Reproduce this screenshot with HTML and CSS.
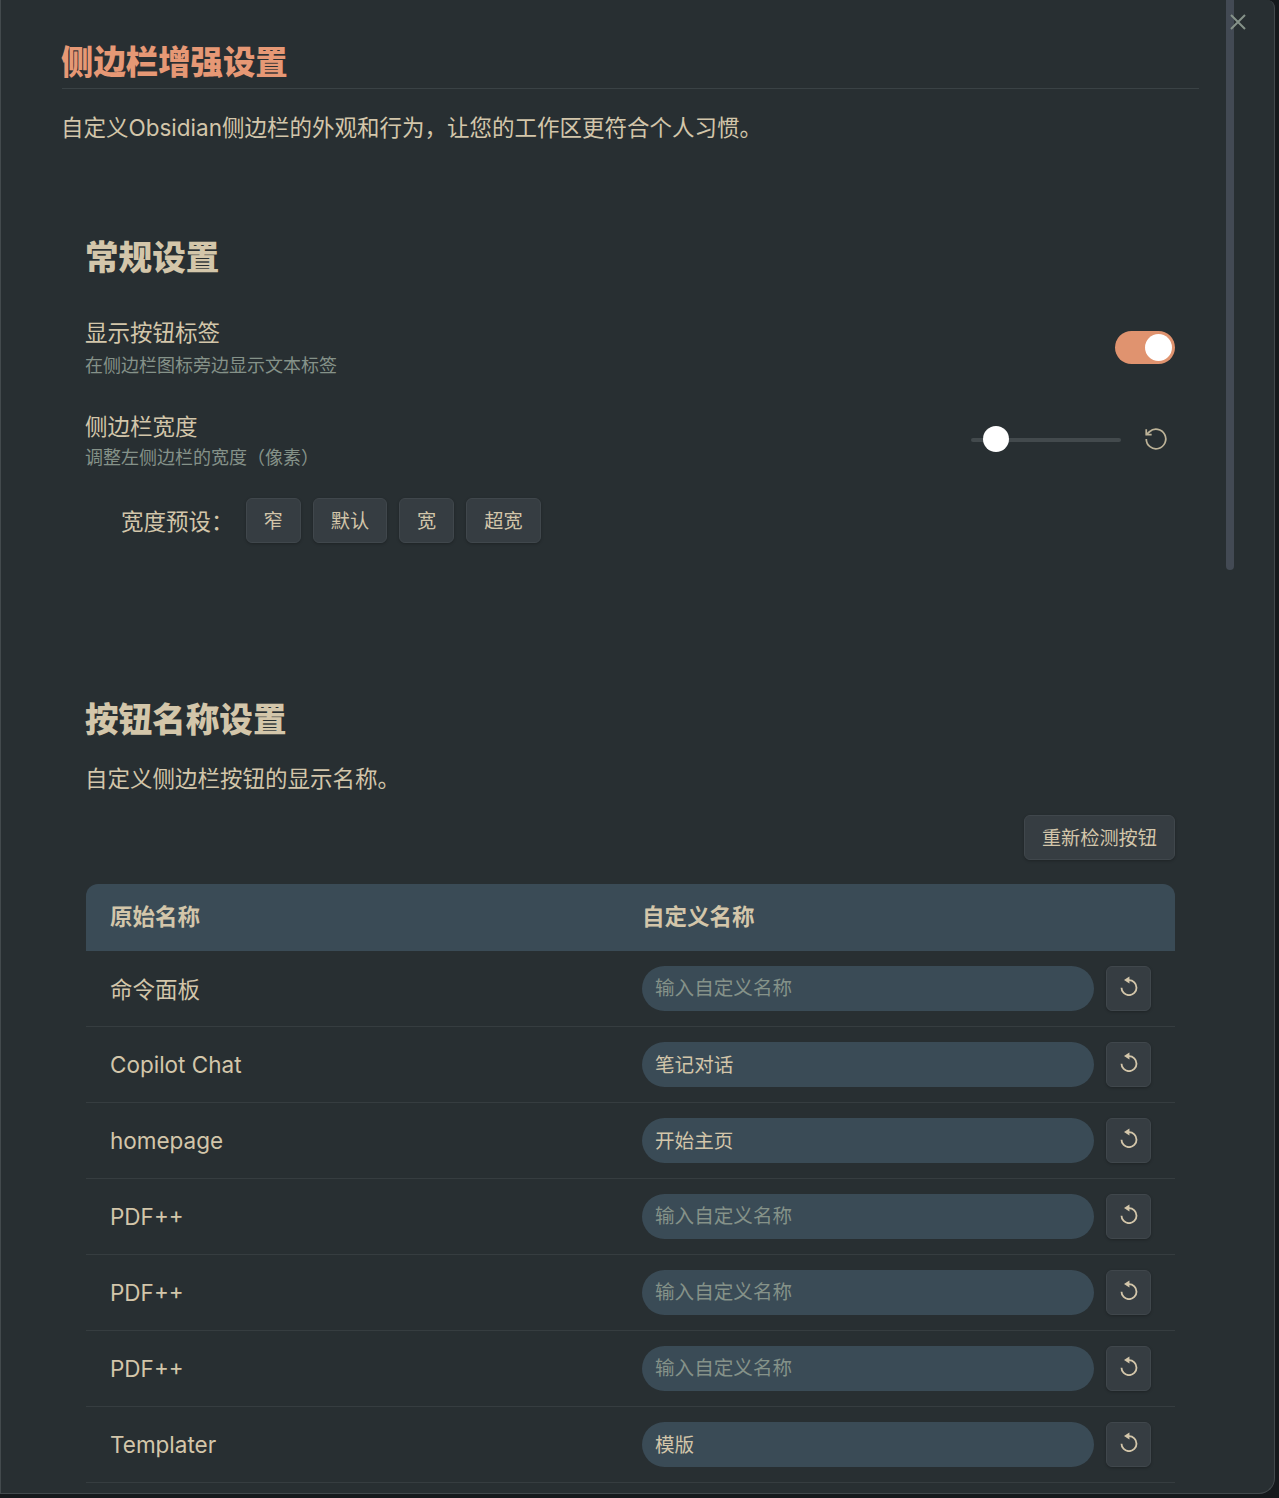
FILE: index.html
```html
<!DOCTYPE html>
<html lang="zh-CN">
<head>
<meta charset="utf-8">
<title>侧边栏增强设置</title>
<link rel="stylesheet" href="styles.css">
</head>
<body>
<div class="modal">
  <button class="close" aria-label="关闭"><svg width="18" height="18" viewBox="0 0 18 18"><path d="M2 2 L16 16 M16 2 L2 16"/></svg></button>
  <div class="scrollbar"></div>
  <div class="content">
    <h1 class="title">侧边栏增强设置</h1>
    <p class="lead">自定义Obsidian侧边栏的外观和行为，让您的工作区更符合个人习惯。</p>

    <section class="card general">
      <h2 class="card-title">常规设置</h2>
      <div class="setting first">
        <div class="info">
          <div class="name">显示按钮标签</div>
          <div class="desc">在侧边栏图标旁边显示文本标签</div>
        </div>
        <div class="toggle"><span class="knob"></span></div>
      </div>
      <div class="setting second">
        <div class="info">
          <div class="name">侧边栏宽度</div>
          <div class="desc">调整左侧边栏的宽度（像素）</div>
        </div>
        <div class="slider-wrap">
          <div class="slider"><span class="thumb"></span></div>
          <svg class="extra" width="26" height="26" viewBox="0 0 24 24"><path d="M3 12a9 9 0 1 0 3-6.7L3 8"/><path d="M3 3v5h5"/></svg>
        </div>
      </div>
      <div class="presets">
        <span class="presets-label">宽度预设：</span>
        <button class="btn">窄</button>
        <button class="btn">默认</button>
        <button class="btn">宽</button>
        <button class="btn">超宽</button>
      </div>
    </section>

    <section class="card names">
      <h2 class="card-title">按钮名称设置</h2>
      <p class="card-lead">自定义侧边栏按钮的显示名称。</p>
      <div class="actions"><button class="btn">重新检测按钮</button></div>
      <div class="table">
        <div class="row head"><div>原始名称</div><div>自定义名称</div></div>
        <div class="row"><div class="cjk-name">命令面板</div><div class="cell"><input class="field" placeholder="输入自定义名称"><button class="icon-btn"><svg width="20" height="20" viewBox="0 0 24 24"><path d="M12 5a9 9 0 1 1-9 9"/><path class="fill" d="M12.5 .5V9L6 4.7z"/></svg></button></div></div>
        <div class="row"><div>Copilot Chat</div><div class="cell"><input class="field" value="笔记对话"><button class="icon-btn"><svg width="20" height="20" viewBox="0 0 24 24"><path d="M12 5a9 9 0 1 1-9 9"/><path class="fill" d="M12.5 .5V9L6 4.7z"/></svg></button></div></div>
        <div class="row"><div>homepage</div><div class="cell"><input class="field" value="开始主页"><button class="icon-btn"><svg width="20" height="20" viewBox="0 0 24 24"><path d="M12 5a9 9 0 1 1-9 9"/><path class="fill" d="M12.5 .5V9L6 4.7z"/></svg></button></div></div>
        <div class="row"><div>PDF++</div><div class="cell"><input class="field" placeholder="输入自定义名称"><button class="icon-btn"><svg width="20" height="20" viewBox="0 0 24 24"><path d="M12 5a9 9 0 1 1-9 9"/><path class="fill" d="M12.5 .5V9L6 4.7z"/></svg></button></div></div>
        <div class="row"><div>PDF++</div><div class="cell"><input class="field" placeholder="输入自定义名称"><button class="icon-btn"><svg width="20" height="20" viewBox="0 0 24 24"><path d="M12 5a9 9 0 1 1-9 9"/><path class="fill" d="M12.5 .5V9L6 4.7z"/></svg></button></div></div>
        <div class="row"><div>PDF++</div><div class="cell"><input class="field" placeholder="输入自定义名称"><button class="icon-btn"><svg width="20" height="20" viewBox="0 0 24 24"><path d="M12 5a9 9 0 1 1-9 9"/><path class="fill" d="M12.5 .5V9L6 4.7z"/></svg></button></div></div>
        <div class="row"><div>Templater</div><div class="cell"><input class="field" value="模版"><button class="icon-btn"><svg width="20" height="20" viewBox="0 0 24 24"><path d="M12 5a9 9 0 1 1-9 9"/><path class="fill" d="M12.5 .5V9L6 4.7z"/></svg></button></div></div>
      </div>
    </section>
  </div>
</div>
</body>
</html>
```
FILE: styles.css
```css
* { box-sizing: border-box; }
html, body { margin: 0; height: 1498px; overflow: hidden; background: #15191c; }
body {
  font-family: Inter, "Noto Sans CJK SC", sans-serif;
  color: #d3c6aa;
  font-size: 22.5px;
}
.modal {
  position: relative;
  width: 1275px;
  height: 1494px;
  background: #282f32;
  border: 1px solid #434a4d;
  border-top: 0;
  border-radius: 0 8px 16px 0;
  overflow: hidden;
}
.close {
  position: absolute;
  top: 13px;
  right: 27px;
  width: 18px;
  height: 18px;
  padding: 0;
  border: 0;
  background: none;
  z-index: 2;
}
.close svg { display: block; }
.close path { stroke: #859289; stroke-width: 2; fill: none; }
.scrollbar {
  position: absolute;
  top: 0;
  left: 1225px;
  width: 8px;
  height: 570px;
  background: #434a54;
  border-radius: 0 0 4px 4px;
}
.content { padding: 0 75px 0 61px; }
.title {
  margin: 0;
  padding-top: 39px;
  height: 89px;
  border-bottom: 1px solid #3a4245;
  font-size: 32.4px;
  line-height: 48px;
  font-weight: 900;
  color: #e69875;
  text-indent: -1px;
}
.lead {
  margin: 21px 0 0;
  line-height: 36px;
  text-indent: -1px;
}
.card { padding: 0 24px; }
.general { margin-top: 87px; height: 364px; }
.card-title {
  margin: 0;
  font-size: 33.6px;
  line-height: 50px;
  font-weight: 900;
  color: #d3c6aa;
  text-indent: -1px;
}
.setting {
  display: flex;
  justify-content: space-between;
  align-items: center;
  height: 93px;
}
.setting.first { margin-top: 25px; height: 78px; }
.setting.second { margin-top: 8px; }
.name { line-height: 34px; text-indent: -1px; }
.desc { font-size: 18px; line-height: 27px; color: #859289; margin-top: 2px; text-indent: -1px; }
.second .desc { margin-top: 0; }
.toggle {
  width: 60px;
  height: 33px;
  border-radius: 17px;
  background: #e0936f;
  position: relative;
}
.knob {
  position: absolute;
  top: 3px;
  right: 3px;
  width: 27px;
  height: 27px;
  border-radius: 50%;
  background: #fff;
}
.slider-wrap { display: flex; align-items: center; gap: 22px; margin: 0 6px 2px 0; }
.slider {
  position: relative;
  width: 150px;
  height: 4px;
  border-radius: 2px;
  background: #434a4d;
}
.thumb {
  position: absolute;
  left: 12px;
  top: -12px;
  width: 26px;
  height: 26px;
  border-radius: 50%;
  background: #fff;
}
.extra { fill: none; stroke: #bdb398; stroke-width: 1.6; margin-bottom: 2px; }
.presets {
  display: flex;
  align-items: center;
  gap: 12px;
  padding-left: 35px;
  margin-top: 11px;
}
.presets-label { margin-right: 0; padding-bottom: 2px; }
.btn {
  height: 45px;
  padding: 0 17px 2px;
  font: inherit;
  font-size: 19.2px;
  color: #d3c6aa;
  background: #363d42;
  border: 1px solid #40474c;
  border-radius: 6px;
  box-shadow: 0 1px 3px rgba(0, 0, 0, .25);
}
.names { margin-top: 98px; }
.card-lead { margin: 17px 0 0; line-height: 34px; text-indent: -1px; }
.actions { display: flex; justify-content: flex-end; margin-top: 19px; }
.table { margin-top: 24px; }
.row {
  display: grid;
  grid-template-columns: 532px 1fr;
  align-items: center;
  height: 76px;
  padding: 0 24px;
  border-bottom: 1px solid #363d40;
}
.cjk-name { padding-bottom: 2px; }
.row.head {
  height: 67px;
  padding-bottom: 5px;
  background: #3a4b56;
  border: 0;
  border-radius: 12px 12px 0 0;
  font-weight: 700;
}
.cell { display: flex; gap: 12px; }
.field {
  flex: 1;
  min-width: 0;
  height: 45px;
  padding: 0 13px 2px;
  border: 0;
  border-radius: 23px;
  background: #3a4b56;
  font: inherit;
  font-size: 19.6px;
  color: #d3c6aa;
  outline: none;
}
.field::placeholder { color: #859289; opacity: 1; }
.icon-btn {
  flex: none;
  width: 45px;
  height: 45px;
  padding: 0 0 6px;
  display: flex;
  align-items: center;
  justify-content: center;
  background: #363d42;
  border: 1px solid #40474c;
  border-radius: 6px;
  box-shadow: 0 1px 3px rgba(0, 0, 0, .25);
}
.icon-btn svg { fill: none; stroke: #d3c6aa; stroke-width: 2.2; }
.icon-btn .fill { fill: #d3c6aa; stroke: none; }
```
